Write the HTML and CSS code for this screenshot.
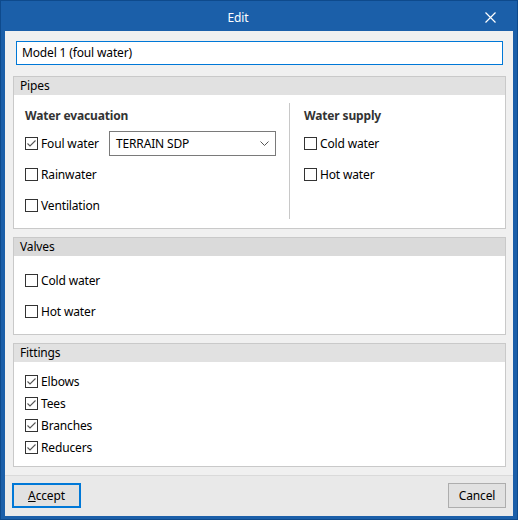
FILE: index.html
```html
<!DOCTYPE html>
<html>
<head>
<meta charset="utf-8">
<link rel="stylesheet" href="styles.css">
</head>
<body>
<div class="window">
  <div class="titlebar">
    <div class="title">Edit</div>
    <div class="close">
      <svg width="11" height="11" viewBox="0 0 11 11"><path d="M0.5 0.5 L10.5 10.5 M10.5 0.5 L0.5 10.5" stroke="#fff" stroke-width="1.2" fill="none"/></svg>
    </div>
  </div>
  <div class="client">
    <div class="main">
      <div class="name-input">Model 1 (foul water)</div>

      <div class="group pipes">
        <div class="group-header">Pipes</div>
        <div class="group-body cols">
          <div class="col col-left">
            <div class="heading">Water evacuation</div>
            <div class="row">
              <span class="cb checked"><svg width="11" height="11" viewBox="0 0 11 11"><path d="M1.5 5.5 L4 8 L9.5 2.5" stroke="#555" stroke-width="1.1" fill="none"/></svg></span>
              <span class="lbl lbl-foul">Foul water</span>
              <div class="select">
                <span>TERRAIN SDP</span>
                <svg width="9" height="6" viewBox="0 0 9 6"><path d="M0.5 0.5 L4.5 4.5 L8.5 0.5" stroke="#555" stroke-width="1" fill="none"/></svg>
              </div>
            </div>
            <div class="row"><span class="cb"></span><span class="lbl">Rainwater</span></div>
            <div class="row"><span class="cb"></span><span class="lbl">Ventilation</span></div>
          </div>
          <div class="vsep"></div>
          <div class="col col-right">
            <div class="heading">Water supply</div>
            <div class="row"><span class="cb"></span><span class="lbl">Cold water</span></div>
            <div class="row"><span class="cb"></span><span class="lbl">Hot water</span></div>
          </div>
        </div>
      </div>

      <div class="group valves">
        <div class="group-header dark">Valves</div>
        <div class="group-body list">
          <div class="row"><span class="cb"></span><span class="lbl">Cold water</span></div>
          <div class="row"><span class="cb"></span><span class="lbl">Hot water</span></div>
        </div>
      </div>

      <div class="group fittings">
        <div class="group-header">Fittings</div>
        <div class="group-body list tight">
          <div class="row"><span class="cb checked"><svg width="11" height="11" viewBox="0 0 11 11"><path d="M1.5 5.5 L4 8 L9.5 2.5" stroke="#555" stroke-width="1.1" fill="none"/></svg></span><span class="lbl">Elbows</span></div>
          <div class="row"><span class="cb checked"><svg width="11" height="11" viewBox="0 0 11 11"><path d="M1.5 5.5 L4 8 L9.5 2.5" stroke="#555" stroke-width="1.1" fill="none"/></svg></span><span class="lbl">Tees</span></div>
          <div class="row"><span class="cb checked"><svg width="11" height="11" viewBox="0 0 11 11"><path d="M1.5 5.5 L4 8 L9.5 2.5" stroke="#555" stroke-width="1.1" fill="none"/></svg></span><span class="lbl">Branches</span></div>
          <div class="row"><span class="cb checked"><svg width="11" height="11" viewBox="0 0 11 11"><path d="M1.5 5.5 L4 8 L9.5 2.5" stroke="#555" stroke-width="1.1" fill="none"/></svg></span><span class="lbl">Reducers</span></div>
        </div>
      </div>
    </div>
    <div class="footer">
      <div class="btn btn-accept"><u>A</u>ccept</div>
      <div class="btn btn-cancel">Cancel</div>
    </div>
  </div>
</div>
</body>
</html>
```

FILE: styles.css
```css
* { box-sizing: border-box; }
html, body { margin: 0; padding: 0; }
body {
  width: 518px;
  height: 520px;
  font-family: "Noto Sans", "Liberation Sans", sans-serif;
  font-size: 12px;
  letter-spacing: -0.15px;
  color: #000;
  overflow: hidden;
}
.window {
  width: 518px;
  height: 520px;
  background: #1b5fa9;
  border: 1px solid #0e4a8c;
  padding: 0 4px 3px 4px;
  display: flex;
  flex-direction: column;
}
.titlebar {
  height: 30px;
  display: flex;
  align-items: center;
  color: #fff;
}
.title {
  flex: 1;
  text-align: center;
  font-size: 12px;
  padding-left: 4px;
  padding-top: 2px;
}
.close {
  width: 46px;
  height: 30px;
  display: flex;
  align-items: center;
  justify-content: center;
  padding-top: 2px;
}
.close svg { display: block; }
.client {
  flex: 1;
  background: #f0f0f0;
  display: flex;
  flex-direction: column;
}
.main {
  flex: 1;
  padding: 10px 7px 0 8px;
}
.name-input {
  margin-left: 3px;
  width: 487px;
  height: 24px;
  border: 1px solid #0078d7;
  background: #fff;
  padding: 0 5px;
  line-height: 22px;
}
.group {
  margin-top: 11px;
  width: 493px;
  border: 1px solid #c9c9c9;
  background: #fff;
  display: flex;
  flex-direction: column;
}
.valves, .fittings { margin-top: 8px; }
.pipes { height: 153px; }
.valves { height: 98px; }
.fittings { height: 124px; }
.group-header {
  height: 18px;
  background: #e1e1e1;
  padding-left: 6px;
  line-height: 18px;
}
.group-header.dark { background: #dadada; }
.group-body { flex: 1; }
.cols {
  display: flex;
  padding: 11px 0 0 11px;
}
.col { display: flex; flex-direction: column; }
.col-left { width: 264px; }
.col-right { padding-left: 14px; }
.vsep {
  width: 1px;
  background: #c8c8c8;
  margin-top: -3px;
  height: 116px;
}
.heading {
  height: 20px;
  line-height: 20px;
  font-weight: bold;
  color: #333;
  margin-bottom: 2px;
}
.row {
  height: 31px;
  display: flex;
  align-items: center;
}
.list { padding: 9px 0 0 11px; }
.list.tight { padding-top: 8px; }
.list.tight .row { height: 22px; }
.cb {
  width: 13px;
  height: 13px;
  border: 1px solid #333;
  background: #fff;
  display: inline-flex;
  align-items: center;
  justify-content: center;
  flex: none;
}
.cb svg { display: block; }
.lbl { margin-left: 3px; }
.lbl-foul { width: 68px; flex: none; }
.select {
  width: 167px;
  height: 25px;
  border: 1px solid #7a7a7a;
  background: #fff;
  display: flex;
  align-items: center;
  justify-content: space-between;
  padding: 0 6px 0 6px;
}
.select svg { display: block; }
.footer {
  height: 41px;
  border-top: 1px solid #dadada;
  background: #e9e9e9;
  display: flex;
  justify-content: space-between;
  align-items: flex-start;
  padding: 7px 7px 0 7px;
}
.btn {
  height: 25px;
  background: #e1e1e1;
  display: flex;
  align-items: center;
  justify-content: center;
}
.btn-accept {
  width: 69px;
  border: 2px solid #0078d7;
}
.btn-cancel {
  width: 58px;
  border: 1px solid #adadad;
}
```
